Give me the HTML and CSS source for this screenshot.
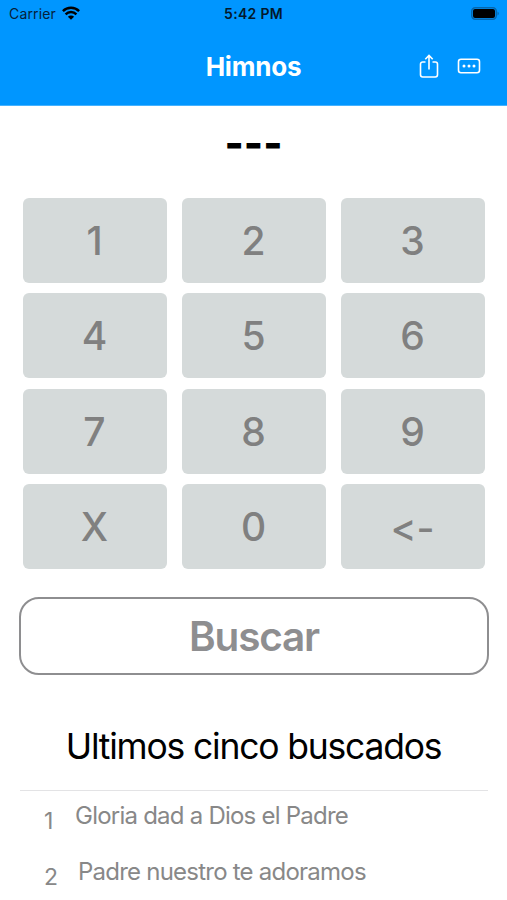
FILE: index.html
```html
<!DOCTYPE html>
<html lang="es">
<head>
  <meta charset="UTF-8" />
  <meta name="viewport" content="width=device-width, initial-scale=1.0"/>
  <title>Himnos</title>
  <link rel="stylesheet" href="styles.css">
</head>
<body>

  <header>
    <div class="status-bar">
      <div class="carrier">
        <span>Carrier</span>
        <svg class="wifi" viewBox="0 0 18 14" width="18" height="14">
          <path d="M0.9 5.2 a11.4 11.4 0 0 1 16.2 0" />
          <path d="M3.6 8.3 a7.6 7.6 0 0 1 10.8 0" />
          <path class="dot" d="M9 13.8 L5.9 10.7 a4.4 4.4 0 0 1 6.2 0 Z" />
        </svg>
      </div>
      <div class="time">5:42 PM</div>
      <div class="battery">
        <svg viewBox="0 0 29 13" width="29" height="13">
          <rect class="shell" x="0.75" y="0.75" width="24.5" height="11.5" rx="3.4" />
          <rect x="2" y="2" width="22" height="9" rx="2" />
          <path class="cap" d="M26.5 4.5 a2.2 2.2 0 0 1 0 4 Z" />
        </svg>
      </div>
    </div>
    <div class="nav-bar">
      <h1>Himnos</h1>
      <div class="actions">
        <svg viewBox="0 0 20 26" width="20" height="26">
          <path d="M6.5 9 H3.7 a2.2 2.2 0 0 0 -2.2 2.2 V21.8 a2.2 2.2 0 0 0 2.2 2.2 H16.3 a2.2 2.2 0 0 0 2.2 -2.2 V11.2 a2.2 2.2 0 0 0 -2.2 -2.2 H13.5" />
          <path d="M10 16.5 V2.5 M6.3 6.2 L10 2.5 L13.7 6.2" />
        </svg>
        <svg viewBox="0 0 24 16" width="24" height="16">
          <rect x="1.5" y="1.3" width="21" height="13.4" rx="2.5" />
          <g class="dots">
            <circle cx="7" cy="8" r="1.5" />
            <circle cx="12" cy="8" r="1.5" />
            <circle cx="17" cy="8" r="1.5" />
          </g>
        </svg>
      </div>
    </div>
  </header>

  <main>
    <div class="number" id="number">---</div>

    <div class="keypad">
      <button>1</button>
      <button>2</button>
      <button>3</button>
      <button>4</button>
      <button>5</button>
      <button>6</button>
      <button>7</button>
      <button>8</button>
      <button>9</button>
      <button>X</button>
      <button>0</button>
      <button class="back">&lt;-</button>
    </div>

    <button class="search">Buscar</button>

    <h2>Ultimos cinco buscados</h2>

    <ul class="recent">
      <li><span class="num">1</span><span class="title">Gloria dad a Dios el Padre</span></li>
      <li><span class="num">2</span><span class="title second">Padre nuestro te adoramos</span></li>
    </ul>
  </main>

</body>
</html>
```

FILE: styles.css
```css
* {
  margin: 0;
  padding: 0;
  box-sizing: border-box;
}

html, body {
  height: 100%;
  overflow: hidden;
  background: #fff;
  font-family: Inter, sans-serif;
}

header {
  height: 106px;
  background: #0096ff;
  border-bottom: 1px solid #45b2ff;
}

.status-bar {
  display: grid;
  grid-template-columns: 1fr auto 1fr;
  align-items: center;
  height: 27px;
  padding: 0 7px 0 9px;
  font-size: 14px;
  color: #06213a;
}

.carrier {
  display: flex;
  align-items: center;
  gap: 6px;
  letter-spacing: 0.15px;
}

.wifi {
  margin-top: -2px;
}

.wifi path {
  fill: none;
  stroke: #000;
  stroke-width: 2.4;
}

.wifi .dot {
  fill: #000;
  stroke: none;
}

.time {
  margin-right: 2px;
  font-weight: 600;
  letter-spacing: 0.3px;
  color: #03192c;
}

.battery {
  display: flex;
  justify-content: flex-end;
}

.battery .shell {
  fill: none;
  stroke: #0567ae;
  stroke-width: 1.5;
}

.battery .cap {
  fill: #0567ae;
}

.nav-bar {
  display: grid;
  grid-template-columns: 1fr auto 1fr;
  align-items: center;
  height: 78px;
  padding: 0 26px;
}

.nav-bar h1 {
  grid-column: 2;
  font-size: 26px;
  font-weight: 700;
  letter-spacing: -0.2px;
  color: #fff;
}

.actions {
  display: flex;
  align-items: center;
  justify-content: flex-end;
  gap: 18px;
}

.actions svg {
  fill: none;
  stroke: #fff;
  stroke-width: 1.6;
}

.actions .dots {
  fill: #fff;
  stroke: none;
}

.number {
  height: 92px;
  padding-top: 9px;
  text-align: center;
  font-size: 41px;
  font-weight: 800;
  line-height: 56px;
}

.keypad {
  display: grid;
  grid-template-columns: repeat(3, 144px);
  grid-auto-rows: 85px;
  gap: 10.4px 15px;
  justify-content: center;
}

.keypad button {
  border: none;
  border-radius: 6px;
  background: #d5dada;
  color: #808080;
  font-family: inherit;
  font-size: 39px;
  font-weight: 550;
}

/* keep "<-" as two characters instead of an arrow */
.keypad .back {
  padding-top: 1px;
  font-feature-settings: "calt" 0, "liga" 0;
}

.search {
  display: block;
  width: 470px;
  height: 78px;
  margin: 28px auto 0 19px;
  border: 2px solid #8e8e90;
  border-radius: 20px;
  background: #fff;
  color: #8e8e90;
  font-family: inherit;
  font-size: 40.5px;
  font-weight: 600;
  letter-spacing: -1.2px;
}

h2 {
  margin-top: 49px;
  text-align: center;
  font-size: 35.5px;
  font-weight: 400;
  line-height: 46px;
  letter-spacing: -1.2px;
}

.recent {
  list-style: none;
  margin: 20px 19px 0 20px;
  border-top: 1px solid #e3e3e5;
  color: #888;
}

.recent li {
  display: flex;
  align-items: flex-start;
  height: 56px;
  padding-top: 10px;
  line-height: 30px;
}

.num {
  width: 55px;
  padding: 5px 0 0 24px;
  font-size: 23px;
}

.title {
  font-size: 24px;
  letter-spacing: -0.77px;
}

.title.second {
  padding-left: 3px;
}
```
